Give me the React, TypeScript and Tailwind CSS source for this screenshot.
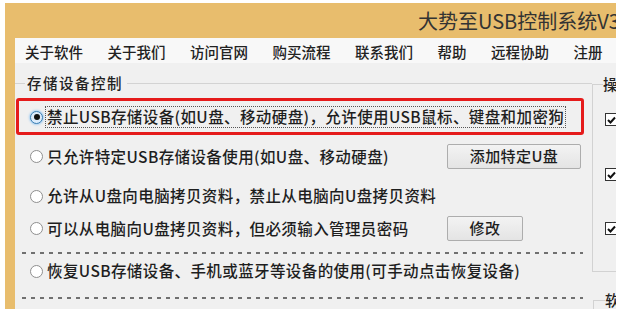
import React from "react";

const F = "font-['Noto_Sans_CJK_SC','Noto_Sans',sans-serif]";

function Radio({ checked }: { checked?: boolean }) {
  return checked ? (
    <span className="w-[13px] h-[13px] rounded-full border border-[#3c7fb1] bg-[#dcecfc] shadow-[0_0_2px_1px_#a9d0f2] flex items-center justify-center shrink-0">
      <span className="w-[6px] h-[6px] rounded-full bg-[#111]" />
    </span>
  ) : (
    <span className="w-[13px] h-[13px] rounded-full border border-[#8f8f8f] bg-white shrink-0" />
  );
}

function Check() {
  return (
    <span className="w-[13px] h-[13px] border border-[#333] bg-white flex items-center justify-center shrink-0">
      <svg width="9" height="8" viewBox="0 0 9 8">
        <path d="M1 4 L3.5 6.5 L8 1.5" fill="none" stroke="#111" strokeWidth="2" />
      </svg>
    </span>
  );
}

function Btn({ children, w }: { children: React.ReactNode; w: string }) {
  return (
    <div
      className={
        "h-[25px] border border-[#adadad] rounded-[2px] bg-[linear-gradient(#f3f3f3,#e4e4e4)] flex items-center justify-center text-[15px] text-[#1e1e1e] " +
        w
      }
    >
      {children}
    </div>
  );
}

export default function App() {
  const menus = ["关于软件", "关于我们", "访问官网", "购买流程", "联系我们", "帮助", "远程协助", "注册"];
  return (
    <div className={"w-[620px] h-[309px] bg-white overflow-hidden pt-[3px] pl-[5px] font-medium " + F}>
      <div className="w-[611px] h-[306px] bg-[#e8bd6d] flex flex-col overflow-hidden">
        <div className="h-[35px] shrink-0 flex items-center pl-[413px] whitespace-nowrap text-[20px] font-normal text-[#333]">
          大势至USB控制系统V3.0
        </div>
        <div className="flex-1 ml-[10px] bg-[#f0f0f0] flex flex-col">
          <div className="h-[25px] shrink-0 bg-[#f8f8f8] flex items-center gap-[24.5px] pl-[10px] pt-[2px] text-[14.5px] text-[#222] whitespace-nowrap">
            {menus.map((m) => (
              <span key={m}>{m}</span>
            ))}
          </div>
          <div className="flex">
            <div className="w-[577px] shrink-0 flex flex-col text-[15.5px] tracking-[0.4px] text-[#1e1e1e] whitespace-nowrap">
              <div className="mt-[10px] h-[20px] flex items-center">
                <span className="w-[10px] h-px bg-[#d3d3d3]" />
                <span className="pl-[2px] pr-[4px] text-[14.5px] tracking-[1.5px] text-[#222]">存储设备控制</span>
                <span className="flex-1 h-px bg-[#d3d3d3]" />
              </div>
              <div className="mt-[5px] ml-[1px] w-[568px] h-[37px] border-[3px] border-[#e51b1b] rounded-[3px] flex items-center pl-[11px] pt-[1px]">
                <Radio checked />
                <span className="ml-[3px] h-[20px] flex items-center px-[1px] outline outline-1 outline-dotted outline-[#555]">
                  禁止USB存储设备(如U盘、移动硬盘)，允许使用USB鼠标、键盘和加密狗
                </span>
              </div>
              <div className="mt-[8px] h-[26px] flex items-center pl-[15px]">
                <div className="w-[417px] flex items-center">
                  <Radio />
                  <span className="ml-[4px] pt-[2px]">只允许特定USB存储设备使用(如U盘、移动硬盘)</span>
                </div>
                <Btn w="w-[134px]">添加特定U盘</Btn>
              </div>
              <div className="mt-[14px] h-[26px] flex items-center pl-[15px]">
                <Radio />
                <span className="ml-[4px]">允许从U盘向电脑拷贝资料，禁止从电脑向U盘拷贝资料</span>
              </div>
              <div className="mt-[6px] h-[26px] flex items-center pl-[15px]">
                <div className="w-[417px] flex items-center">
                  <Radio />
                  <span className="ml-[4px] pt-[2px]">可以从电脑向U盘拷贝资料，但必须输入管理员密码</span>
                </div>
                <Btn w="w-[76px]">修改</Btn>
              </div>
              <div className="mt-[11px] ml-[7px] w-[561px] h-[2px] bg-[repeating-linear-gradient(90deg,#707070_0_4px,transparent_4px_9px)]" />
              <div className="mt-[4px] h-[26px] flex items-center pl-[15px]">
                <Radio />
                <span className="ml-[4px]">恢复USB存储设备、手机或蓝牙等设备的使用(可手动点击恢复设备)</span>
              </div>
              <div className="mt-[13px] ml-[7px] w-[561px] h-[2px] bg-[repeating-linear-gradient(90deg,#707070_0_4px,transparent_4px_9px)]" />
            </div>
            <div className="flex-1 flex flex-col text-[14.5px] text-[#222] whitespace-nowrap">
              <div className="relative mt-[21px] h-[188px] border-l border-t border-b border-[#d2d2d2] pl-[12px] pt-[28px] flex flex-col">
                <span className="absolute left-[10px] -top-[11px] bg-[#f0f0f0] leading-[20px]">操作选项</span>
                <Check />
                <div className="mt-[42px]">
                  <Check />
                </div>
                <div className="mt-[41px]">
                  <Check />
                </div>
              </div>
              <div className="relative mt-[28px] ml-[1px] h-[40px] border-l border-t border-[#d2d2d2]">
                <span className="absolute left-[11px] -top-[11px] bg-[#f0f0f0] leading-[20px]">软件设置</span>
              </div>
            </div>
          </div>
        </div>
      </div>
    </div>
  );
}
